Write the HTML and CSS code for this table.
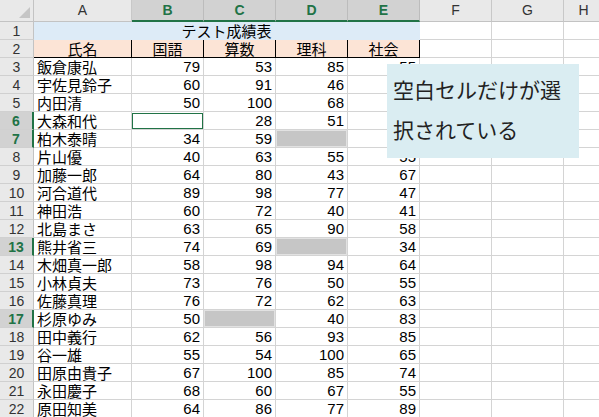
FILE: index.html
```html
<!DOCTYPE html>
<html lang="ja">
<head>
<meta charset="utf-8">
<title>テスト成績表</title>
<link rel="stylesheet" href="styles.css">
</head>
<body>
<div class="sheet">
  <div class="corner"><span class="tri"></span></div>
  <div class="ch">A</div><div class="ch sel">B</div><div class="ch sel">C</div><div class="ch sel">D</div><div class="ch sel">E</div><div class="ch">F</div><div class="ch">G</div><div class="ch">H</div>

  <div class="rh">1</div><div class="c title">テスト成績表</div><div class="c"></div><div class="c"></div><div class="c"></div>

  <div class="rh">2</div><div class="c hd">氏名</div><div class="c hd">国語</div><div class="c hd">算数</div><div class="c hd">理科</div><div class="c hd">社会</div><div class="c"></div><div class="c"></div><div class="c"></div>

  <div class="rh">3</div><div class="c nm">飯倉康弘</div><div class="c n">79</div><div class="c n">53</div><div class="c n">85</div><div class="c n">55</div><div class="c"></div><div class="c"></div><div class="c"></div>
  <div class="rh">4</div><div class="c nm">宇佐見鈴子</div><div class="c n">60</div><div class="c n">91</div><div class="c n">46</div><div class="c n">72</div><div class="c"></div><div class="c"></div><div class="c"></div>
  <div class="rh">5</div><div class="c nm">内田清</div><div class="c n">50</div><div class="c n">100</div><div class="c n">68</div><div class="c n">61</div><div class="c"></div><div class="c"></div><div class="c"></div>
  <div class="rh on">6</div><div class="c nm">大森和代</div><div class="c active"></div><div class="c n">28</div><div class="c n">51</div><div class="c n">49</div><div class="c"></div><div class="c"></div><div class="c"></div>
  <div class="rh on">7</div><div class="c nm">柏木泰晴</div><div class="c n">34</div><div class="c n">59</div><div class="c blank"></div><div class="c n">70</div><div class="c"></div><div class="c"></div><div class="c"></div>
  <div class="rh">8</div><div class="c nm">片山優</div><div class="c n">40</div><div class="c n">63</div><div class="c n">55</div><div class="c n">55</div><div class="c"></div><div class="c"></div><div class="c"></div>
  <div class="rh">9</div><div class="c nm">加藤一郎</div><div class="c n">64</div><div class="c n">80</div><div class="c n">43</div><div class="c n">67</div><div class="c"></div><div class="c"></div><div class="c"></div>
  <div class="rh">10</div><div class="c nm">河合道代</div><div class="c n">89</div><div class="c n">98</div><div class="c n">77</div><div class="c n">47</div><div class="c"></div><div class="c"></div><div class="c"></div>
  <div class="rh">11</div><div class="c nm">神田浩</div><div class="c n">60</div><div class="c n">72</div><div class="c n">40</div><div class="c n">41</div><div class="c"></div><div class="c"></div><div class="c"></div>
  <div class="rh">12</div><div class="c nm">北島まさ</div><div class="c n">63</div><div class="c n">65</div><div class="c n">90</div><div class="c n">58</div><div class="c"></div><div class="c"></div><div class="c"></div>
  <div class="rh on">13</div><div class="c nm">熊井省三</div><div class="c n">74</div><div class="c n">69</div><div class="c blank"></div><div class="c n">34</div><div class="c"></div><div class="c"></div><div class="c"></div>
  <div class="rh">14</div><div class="c nm">木畑真一郎</div><div class="c n">58</div><div class="c n">98</div><div class="c n">94</div><div class="c n">64</div><div class="c"></div><div class="c"></div><div class="c"></div>
  <div class="rh">15</div><div class="c nm">小林貞夫</div><div class="c n">73</div><div class="c n">76</div><div class="c n">50</div><div class="c n">55</div><div class="c"></div><div class="c"></div><div class="c"></div>
  <div class="rh">16</div><div class="c nm">佐藤真理</div><div class="c n">76</div><div class="c n">72</div><div class="c n">62</div><div class="c n">63</div><div class="c"></div><div class="c"></div><div class="c"></div>
  <div class="rh on">17</div><div class="c nm">杉原ゆみ</div><div class="c n">50</div><div class="c blank"></div><div class="c n">40</div><div class="c n">83</div><div class="c"></div><div class="c"></div><div class="c"></div>
  <div class="rh">18</div><div class="c nm">田中義行</div><div class="c n">62</div><div class="c n">56</div><div class="c n">93</div><div class="c n">85</div><div class="c"></div><div class="c"></div><div class="c"></div>
  <div class="rh">19</div><div class="c nm">谷一雄</div><div class="c n">55</div><div class="c n">54</div><div class="c n">100</div><div class="c n">65</div><div class="c"></div><div class="c"></div><div class="c"></div>
  <div class="rh">20</div><div class="c nm">田原由貴子</div><div class="c n">67</div><div class="c n">100</div><div class="c n">85</div><div class="c n">74</div><div class="c"></div><div class="c"></div><div class="c"></div>
  <div class="rh">21</div><div class="c nm">永田慶子</div><div class="c n">68</div><div class="c n">60</div><div class="c n">67</div><div class="c n">55</div><div class="c"></div><div class="c"></div><div class="c"></div>
  <div class="rh">22</div><div class="c nm">原田知美</div><div class="c n">64</div><div class="c n">86</div><div class="c n">77</div><div class="c n">89</div><div class="c"></div><div class="c"></div><div class="c"></div>
</div>
<div class="note">空白セルだけが選<br>択されている</div>
</body>
</html>
```

FILE: styles.css
```css
html, body {
  margin: 0;
  padding: 0;
  background: #ffffff;
  overflow: hidden;
  width: 599px;
  height: 417px;
}
body {
  position: relative;
  font-family: "Noto Sans CJK JP", "Liberation Sans", sans-serif;
  color: #000;
}
.sheet {
  display: grid;
  grid-template-columns: 34px 98px 72px 72px 72px 72px 72px 72px 40px;
  grid-template-rows: 22px;
  grid-auto-rows: 18px;
}
.sheet > div {
  box-sizing: border-box;
  border-right: 1px solid #d4d4d4;
  border-bottom: 1px solid #d4d4d4;
  white-space: nowrap;
}
.corner {
  position: relative;
  background: #e9e9e9;
  border-right-color: #c3c3c3 !important;
  border-bottom-color: #c3c3c3 !important;
}
.tri {
  position: absolute;
  right: 3px;
  bottom: 3px;
  width: 0;
  height: 0;
  border-left: 11px solid transparent;
  border-bottom: 11px solid #c5c5c5;
}
.ch {
  background: #e9e9e9;
  border-right-color: #c8c8c8 !important;
  border-bottom-color: #c3c3c3 !important;
  font-family: "Liberation Sans", "Noto Sans CJK JP", sans-serif;
  font-size: 14px;
  line-height: 21px;
  text-align: center;
  color: #333;
}
.ch.sel {
  background: #d2d2d2;
  color: #217346;
  font-weight: bold;
  border-bottom: 2px solid #217346 !important;
  border-right-color: #bcbcbc !important;
}
.rh {
  background: #e9e9e9;
  border-right-color: #c3c3c3 !important;
  border-bottom-color: #d0d0d0 !important;
  font-family: "Liberation Sans", "Noto Sans CJK JP", sans-serif;
  font-size: 14px;
  line-height: 18px;
  text-align: center;
  color: #333;
}
.rh.on {
  background: #d2d2d2;
  color: #217346;
  font-weight: bold;
  border-right: 2px solid #217346 !important;
}
.c {
  font-size: 15px;
  line-height: 17px;
  background: #fff;
}
.title {
  grid-column: span 5;
  background: #ddebf7;
  text-align: center;
  border-right-color: #ddebf7 !important;
  border-bottom-color: #ddebf7 !important;
}
.hd {
  background: #fce4d6;
  text-align: center;
  border-right: 1px solid #000 !important;
  border-bottom: 1px solid #000 !important;
}
.nm {
  padding-left: 3px;
}
.n {
  text-align: right;
  padding-right: 3px;
  font-family: "Liberation Sans", "Noto Sans CJK JP", sans-serif;
  font-size: 15px;
}
.blank {
  background: #c6c6c6;
  box-shadow: inset 0 0 0 1px #e2e2e2;
}
.active {
  position: relative;
}
.active::after {
  content: "";
  position: absolute;
  left: 0;
  top: 1px;
  right: 0;
  bottom: 0;
  border: 1px solid #217346;
}
.note {
  position: absolute;
  left: 387px;
  top: 64px;
  width: 192px;
  height: 94px;
  box-sizing: border-box;
  padding: 5px 6px;
  background: #daedf2;
  font-family: "Noto Sans CJK JP", sans-serif;
  font-size: 21px;
  line-height: 40px;
  color: #222;
  white-space: nowrap;
}
```
